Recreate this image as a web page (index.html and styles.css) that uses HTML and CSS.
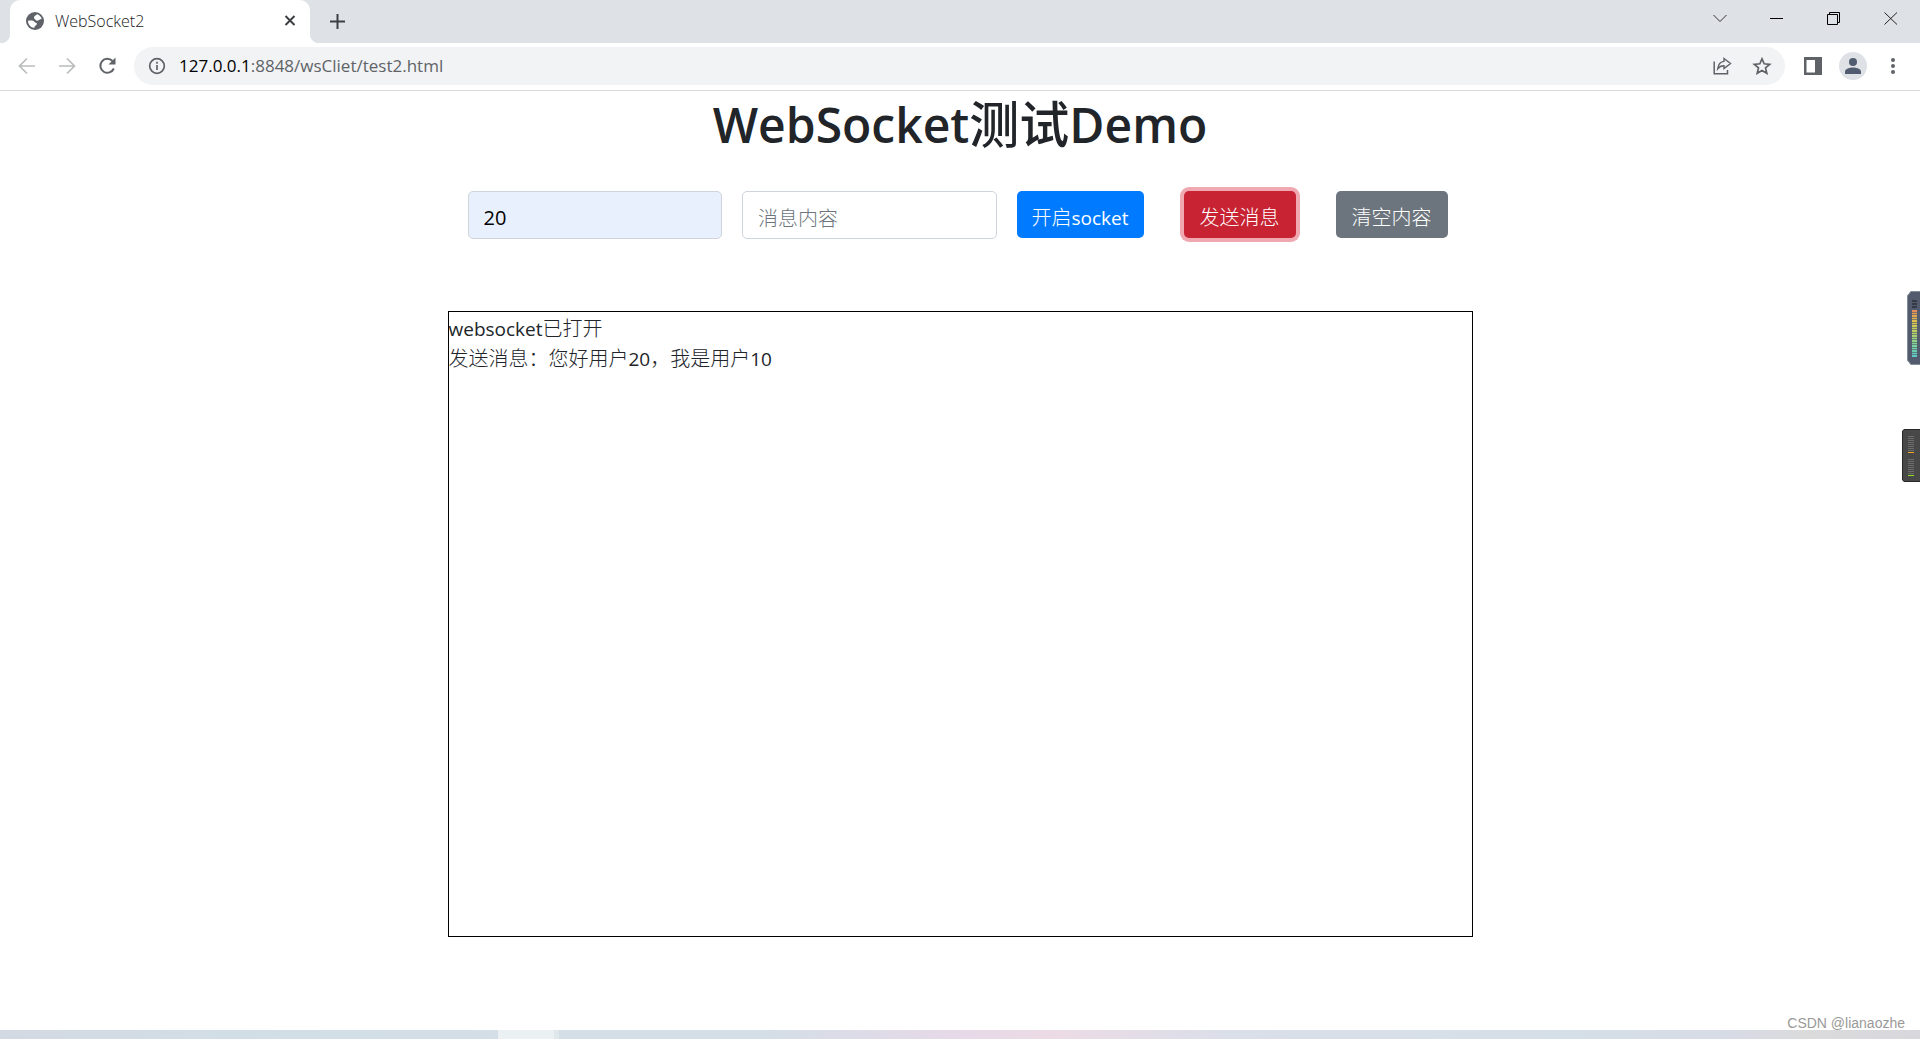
FILE: index.html
```html
<!DOCTYPE html>
<html lang="zh-CN">
<head>
<meta charset="utf-8">
<title>WebSocket2</title>
<link rel="stylesheet" href="styles.css">
</head>
<body>
<header class="browser">
  <div class="tabstrip">
    <div class="tab">
      <svg class="globe" viewBox="0 0 18 18" width="18" height="18"><circle cx="9" cy="9" r="9" fill="#5f6368"/><path d="M2 8.800c1.500-.3 4-.4 5.500.3 1 .5 1 1.500 2.300 1.700 1.200.2 1.500 1.300.5 2.200-.9.800-1.800 1-2 2.900C4.600 15.600 2 12.600 2 8.800zM8 5.200c.3-1.500 1.800-1.600 3.200-2.900 2.200.7 3.800 2.300 4.500 4.500-1.300.6-2.400.9-3.200 1.500-1 .6-2.300.5-2.900-.4C9 7 7.800 6.600 8 5.200z" fill="#fff"/></svg>
      <span class="tab-title">WebSocket2</span>
      <button class="icon-btn" aria-label="关闭标签页"><svg width="20" height="20" viewBox="0 0 20 20"><path d="M5.500 5l9 9M14.500 5l-9 9" stroke="#3c4043" stroke-width="2"/></svg></button>
    </div>
    <button class="icon-btn new-tab" aria-label="新标签页"><svg width="20" height="20" viewBox="0 0 20 20"><path d="M10.500 2v15M3 9.500h15" stroke="#3c4043" stroke-width="2"/></svg></button>
    <div class="window-buttons">
      <button class="icon-btn" aria-label="搜索标签页"><svg width="20" height="20" viewBox="0 0 20 20"><path d="M3.500 7l6.500 6.500L16.500 7" fill="none" stroke="#333"/></svg></button>
      <button class="icon-btn" aria-label="最小化"><svg width="20" height="20" viewBox="0 0 20 20"><path d="M3 10.500h13" stroke="#000"/></svg></button>
      <button class="icon-btn" aria-label="还原"><svg width="20" height="20" viewBox="0 0 20 20"><path d="M3.500 6.500h10v10h-10zM5.500 6V4.500h10v10H14" fill="none" stroke="#000"/></svg></button>
      <button class="icon-btn" aria-label="关闭"><svg width="20" height="20" viewBox="0 0 20 20"><path d="M3.500 4.500l12.500 12M16 4.500l-12.500 12" stroke="#222"/></svg></button>
    </div>
  </div>
  <div class="toolbar">
    <button class="icon-btn" aria-label="后退"><svg width="20" height="20" viewBox="0 0 20 20"><path d="M18 10H3M10 2.500L2.500 10l7.500 7.500" fill="none" stroke="#babcbe" stroke-width="1.700"/></svg></button>
    <button class="icon-btn" aria-label="前进"><svg width="20" height="20" viewBox="0 0 20 20"><path d="M2 10h15M10 2.500l7.500 7.500-7.500 7.500" fill="none" stroke="#babcbe" stroke-width="1.700"/></svg></button>
    <button class="icon-btn" aria-label="重新加载"><svg width="20" height="20" viewBox="0 0 20 20"><path d="M16.800 12.500A7 7 0 1 1 15.500 5" fill="none" stroke="#5f6368" stroke-width="2"/><path d="M18.500 1.500v7h-7z" fill="#5f6368"/></svg></button>
    <div class="omnibox">
      <svg width="20" height="20" viewBox="0 0 20 20"><circle cx="10" cy="10" r="7.300" fill="none" stroke="#5f6368" stroke-width="1.700"/><path d="M10 9v5M10 5.700v2" stroke="#5f6368" stroke-width="1.700"/></svg>
      <span class="url"><b>127.0.0.1</b>:8848/wsCliet/test2.html</span>
      <button class="icon-btn" aria-label="分享"><svg width="20" height="20" viewBox="0 0 20 20"><path d="M2.200 5.500v12.300h13.300V14" fill="none" stroke="#5f6368" stroke-width="1.500"/><path d="M12 2.500l6.500 5-6.500 5V9.800c-3-.1-4.700 1-6.300 3C6.200 8.900 8.200 5.800 12 5.400z" fill="none" stroke="#5f6368" stroke-width="1.400"/></svg></button>
      <button class="icon-btn" aria-label="收藏"><svg width="20" height="20" viewBox="0 0 20 20"><path d="M10 2.800l2.200 5 5.500.5-4.200 3.600 1.300 5.400-4.800-2.900-4.800 2.900 1.300-5.400-4.200-3.600 5.500-.5z" fill="none" stroke="#5f6368" stroke-width="1.700"/></svg></button>
    </div>
    <button class="icon-btn" aria-label="侧边栏"><svg width="20" height="20" viewBox="0 0 20 20"><path fill-rule="evenodd" d="M1 1h18v18H1zM3.500 4v12.500H12V4z" fill="#5f6368"/></svg></button>
    <button class="icon-btn avatar" aria-label="用户"><svg width="28" height="28" viewBox="0 0 28 28"><circle cx="14" cy="14" r="14" fill="#dee1e6"/><circle cx="14" cy="10" r="4" fill="#525c70"/><path d="M6 22v-2.500C6 16.800 11 15.500 14 15.500s8 1.300 8 4V22z" fill="#525c70"/></svg></button>
    <button class="icon-btn" aria-label="菜单"><svg width="20" height="20" viewBox="0 0 20 20"><g fill="#5f6368"><circle cx="10" cy="4" r="2"/><circle cx="10" cy="10" r="2"/><circle cx="10" cy="16" r="2"/></g></svg></button>
  </div>
</header>
<main class="page">
  <h1 class="heading"><span class="latin">WebSocket</span>测试<span class="latin">Demo</span></h1>
  <form class="controls">
    <input class="field filled" type="text" value="20" aria-label="用户编号">
    <input class="field" type="text" placeholder="消息内容" aria-label="消息内容">
    <div class="actions">
      <button type="button" class="btn primary">开启<span class="latin">socket</span></button>
      <button type="button" class="btn danger">发送消息</button>
      <button type="button" class="btn secondary">清空内容</button>
    </div>
  </form>
  <section class="log">
    <p><span class="latin">websocket</span>已打开</p>
    <p>发送消息：您好用户<span class="latin">20</span>，我是用户<span class="latin">10</span></p>
  </section>
</main>
<div class="watermark">CSDN @lianaozhe</div>
<footer class="taskbar">
  <div class="task-active"></div>
  <time class="clock">14:42</time>
</footer>
<svg class="meter meter-volume" width="13" height="74" viewBox="0 0 13 74">
  <defs><linearGradient id="level" x1="0" y1="0" x2="0" y2="1"><stop offset="0" stop-color="#e8885a"/><stop offset=".25" stop-color="#dcc34c"/><stop offset=".5" stop-color="#b5d468"/><stop offset=".75" stop-color="#7bd49a"/><stop offset="1" stop-color="#5cc8c8"/></linearGradient></defs>
  <path d="M13 0H4L0 5v64l4 5h9z" fill="#535c6e"/><path d="M13 .5H4L.5 5v64L4 73.500h9" fill="none" stroke="#858b98"/>
  <path d="M7.500 9v9" stroke="#343a46" stroke-width="5" stroke-dasharray="2 1"/>
  <rect x="5" y="19" width="5" height="47" fill="url(#level)"/>
  <path d="M7.500 21v45" stroke="#535c6e" stroke-opacity=".65" stroke-width="5" stroke-dasharray="1 1 1 2"/>
</svg>
<svg class="meter meter-network" width="18" height="53" viewBox="0 0 18 53">
  <path d="M18 0H2L0 2v49l2 2h16z" fill="#282828"/><path d="M18 1H2L1 2v49l1 1h16z" fill="#484848"/>
  <path d="M9 7v16M9 30v16" stroke="#6c6c6c" stroke-width="6" stroke-dasharray="1 1"/>
  <path d="M6 23.500h6" stroke="#f5a623"/><path d="M6 46.500h6" stroke="#8ee01e"/>
</svg>
</body>
</html>
```
FILE: styles.css
```css
* { box-sizing: border-box; }
body {
  position: relative;
  display: flex;
  flex-direction: column;
  min-height: 100vh;
  margin: 0;
  background: #fff;
  color: #212529;
  font: 20px/30px "Noto Sans CJK SC", sans-serif;
  font-weight: 300;
}
svg { display: block; flex: none; }
h1, p { margin: 0; }
button, input { font: inherit; }
.latin { font-family: "Open Sans", sans-serif; font-size: 19px; line-height: 1; font-weight: 400; }
.icon-btn { flex: none; padding: 0; border: 0; background: none; }

.tabstrip { display: flex; align-items: center; height: 43px; padding-left: 10px; background: #dee1e6; }
.tab {
  position: relative;
  display: flex;
  align-items: center;
  gap: 11px;
  width: 300px;
  height: 43px;
  padding: 0 10px 2px 16px;
  border-radius: 10px 10px 0 0;
  background: #fff;
}
.tab::before, .tab::after {
  content: "";
  position: absolute;
  bottom: 0;
  width: 10px;
  height: 10px;
}
.tab::before { left: -10px; background: radial-gradient(circle at 0 0, #dee1e6 10px, #fff 11px); }
.tab::after { right: -10px; background: radial-gradient(circle at 100% 0, #dee1e6 10px, #fff 11px); }
.tab-title { flex: 1; color: #202124; font: 16px/20px "Open Sans", sans-serif; font-weight: 300; }
.new-tab { margin-left: 17px; }
.window-buttons { display: flex; gap: 37px; margin: 0 19px 8px auto; }

.toolbar {
  display: flex;
  align-items: center;
  gap: 20px;
  height: 48px;
  padding: 0 17px 1px;
  border-bottom: 1px solid #dadce0;
}
.omnibox {
  display: flex;
  flex: 1;
  align-items: center;
  gap: 20px;
  height: 38px;
  margin: 0 -2px 0 -3px;
  padding: 0 13px;
  border-radius: 19px;
  background: #f1f3f4;
}
.toolbar .avatar { margin: 0 -4px; }
.url { flex: 1; margin-left: -8px; color: #5f6368; font: 17px/24px "Open Sans", sans-serif; }
.url b { color: #000; font-weight: 400; }

.page { flex: 1; width: 100%; max-width: 1025px; margin: 0 auto; }
.heading { margin-bottom: 40px; font-size: 50px; line-height: 60px; font-weight: 500; text-align: center; }
.heading .latin { font-size: 48px; font-weight: 600; }
.controls { display: flex; gap: 20px; padding: 0 25px 0 20px; }
.field {
  flex: 1;
  min-width: 0;
  height: 48px;
  padding: 4px 15px 0;
  border: 1px solid #ced4da;
  border-radius: 5px;
  background: #fff;
  color: #000;
}
.filled { background: #e8f0fe; font-family: "Open Sans", sans-serif; font-weight: 400; }
.field::placeholder { color: #6c757d; opacity: 1; }
.actions { display: flex; gap: 40px; }
.btn { height: 47px; padding: 4px 15px 0; border: 0; border-radius: 5px; color: #fff; white-space: nowrap; }
.danger, .secondary { padding: 4px 16px 0; }
.primary { background: #007bff; }
.danger { background: #c82333; box-shadow: 0 0 0 4px #f0a9b1; }
.secondary { background: #6c757d; }
.log { height: 626px; margin-top: 72px; padding-top: 1px; border: 1px solid #000; }

.watermark { padding-right: 15px; color: #999; font: 14px/14px "Liberation Sans", sans-serif; text-align: right; }
.taskbar {
  display: flex;
  justify-content: space-between;
  height: 9px;
  padding: 0 93px 0 498px;
  overflow: hidden;
  background: linear-gradient(90deg, #d3d9e2, #d2dee6 12%, #d4dee7 40%, #e7d9e8 50%, #ecdbe5 55%, #dadfe9 64%, #d5dfe8 82%, #d7dbe6 90%, #dbdbdc 94%, #d8d7dd);
}
.task-active { width: 61px; border-right: 5px solid #e0e7eb; background: #ebf0f3; }
.clock { color: #000; font: 15px/20px "Open Sans", sans-serif; padding-top: 3px; }
.meter { position: absolute; right: 0; }
.meter-volume { top: 291px; }
.meter-network { top: 429px; }
```
